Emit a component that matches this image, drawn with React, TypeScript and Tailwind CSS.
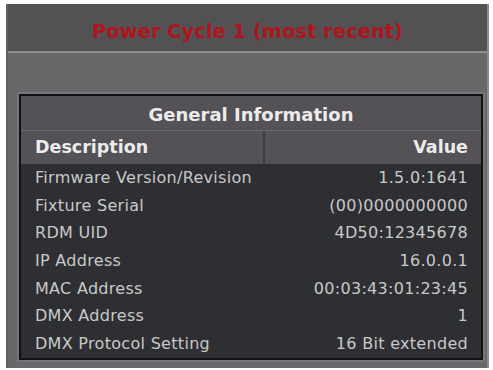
const rows: [string, string][] = [
  ["Firmware Version/Revision", "1.5.0:1641"],
  ["Fixture Serial", "(00)0000000000"],
  ["RDM UID", "4D50:12345678"],
  ["IP Address", "16.0.0.1"],
  ["MAC Address", "00:03:43:01:23:45"],
  ["DMX Address", "1"],
  ["DMX Protocol Setting", "16 Bit extended"],
];

export default function App() {
  return (
    <div className="h-[370px] w-[493px] bg-white pb-[2px] pl-[6px] pr-[4px] pt-[4px] font-['DejaVu_Sans',sans-serif]">
      <div className="flex h-full flex-col border-l-[2px] border-r-[2px] border-l-[#5f5d60] border-r-[#8d8b8e] bg-[#6a676b]">
        <div className="flex h-[47px] items-center justify-center bg-[#545155] pt-[8px]">
          <span className="text-[19.5px] font-bold text-[#ad161b]">Power Cycle 1 (most recent)</span>
        </div>
        <div className="h-[2px] bg-[#8e8c8f]" />
        <div className="flex-1 pb-[6px] pl-[11px] pr-[4px] pt-[41px]">
          <div className="border-[2px] border-[#111113] bg-[#2e2f33] shadow-[0_0_0_2px_#77747a]">
            <div className="flex h-[34px] items-center justify-center bg-[#545157] pt-[3px] text-[18px] font-bold text-[#ececec]">
              General Information
            </div>
            <div className="flex h-[34px] border-t border-[#6c696f] bg-[#545157] text-[17.5px] font-bold text-[#ececec]">
              <div className="flex w-[244px] items-center border-r-[2px] border-r-[#3f3d42] pl-[14px]">Description</div>
              <div className="flex flex-1 items-center justify-end pr-[13px]">Value</div>
            </div>
            {rows.map(([label, value]) => (
              <div key={label} className="flex h-[27.7px] items-center justify-between pl-[14px] pr-[13px] text-[16px] tracking-[0.3px] text-[#c9c9c9]">
                <span>{label}</span>
                <span>{value}</span>
              </div>
            ))}
          </div>
        </div>
      </div>
    </div>
  );
}
